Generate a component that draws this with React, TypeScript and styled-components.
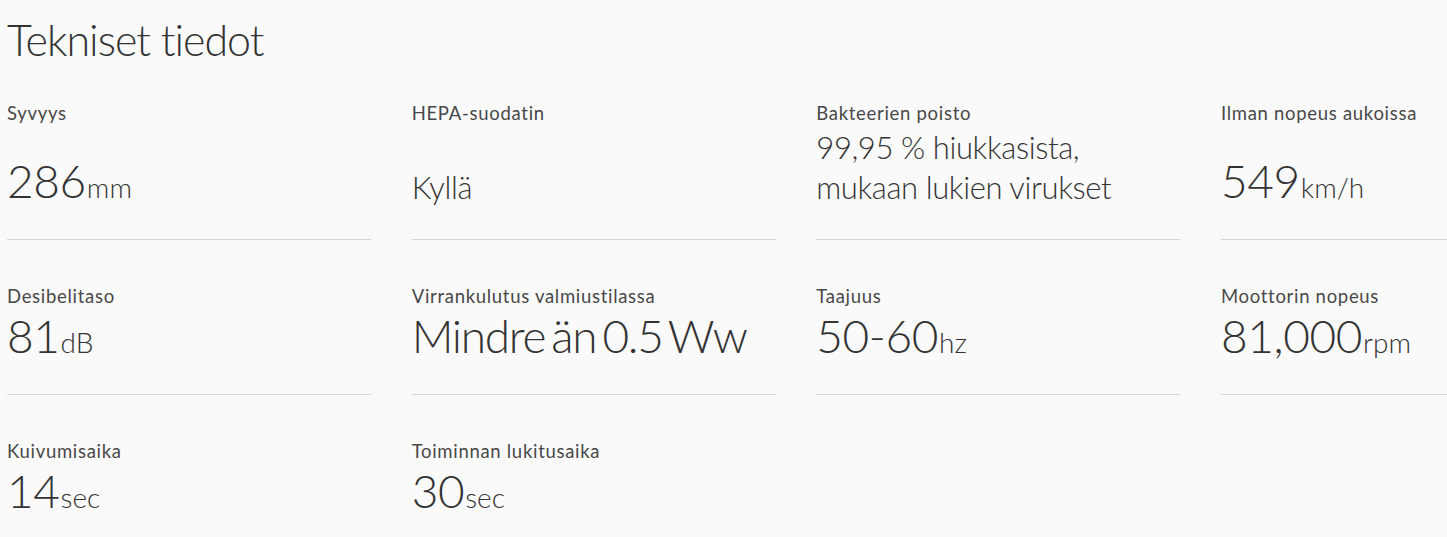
import React from "react";
import styled, { createGlobalStyle } from "styled-components";

const GlobalStyle = createGlobalStyle`
  html, body {
    margin: 0;
    padding: 0;
    background: #fafafa;
    overflow: hidden;
  }
  body {
    font-family: Lato, "Open Sans", sans-serif;
    color: #333;
  }
`;

const Page = styled.section`
  padding: 23px 0 0 7px;
  width: 1600px;
`;

const Title = styled.h2`
  margin: 0;
  font-size: 43px;
  line-height: 34px;
  font-weight: 300;
  color: #333;
  letter-spacing: -1px;
`;

const Grid = styled.div`
  display: grid;
  grid-template-columns: repeat(4, 364px);
  column-gap: 40.67px;
`;

const Cell = styled.div`
  display: flex;
  flex-direction: column;
  padding: 44px 0 32px;
  border-bottom: 1px solid #d6d6d6;
`;

const Label = styled.div`
  font-size: 18.5px;
  line-height: 24px;
  font-weight: 400;
  letter-spacing: 0.7px;
  color: #484848;
  margin-bottom: 2px;
`;

const Value = styled.div<{ $compact?: boolean }>`
  margin-top: auto;
  font-size: 46px;
  line-height: 52px;
  font-weight: 300;
  color: #333;
  white-space: nowrap;
  word-spacing: ${(p) => (p.$compact ? "-5px" : "-4px")};
  letter-spacing: ${(p) => (p.$compact ? "-1.3px" : "-0.4px")};
`;

const TextValue = styled.div`
  margin-top: auto;
  font-size: 31px;
  line-height: 40px;
  font-weight: 300;
  letter-spacing: -0.4px;
  color: #333;
`;

const Unit = styled.span`
  font-size: 28px;
  line-height: 1;
  font-weight: 300;
  letter-spacing: 0;
  margin-left: 1px;
`;

type Spec = {
  label: string;
  value: string;
  unit?: string;
  text?: boolean;
  compact?: boolean;
};

const specs: Spec[] = [
  { label: "Syvyys", value: "286", unit: "mm" },
  { label: "HEPA-suodatin", value: "Kyllä", text: true },
  {
    label: "Bakteerien poisto",
    value: "99,95 % hiukkasista, mukaan lukien virukset",
    text: true,
  },
  { label: "Ilman nopeus aukoissa", value: "549", unit: "km/h" },
  { label: "Desibelitaso", value: "81", unit: "dB" },
  {
    label: "Virrankulutus valmiustilassa",
    value: "Mindre än 0.5 Ww",
    compact: true,
  },
  { label: "Taajuus", value: "50-60", unit: "hz" },
  { label: "Moottorin nopeus", value: "81,000", unit: "rpm" },
  { label: "Kuivumisaika", value: "14", unit: "sec" },
  { label: "Toiminnan lukitusaika", value: "30", unit: "sec" },
];

export default function App() {
  return (
    <Page>
      <GlobalStyle />
      <Title>Tekniset tiedot</Title>
      <Grid>
        {specs.map((s) => (
          <Cell key={s.label}>
            <Label>{s.label}</Label>
            {s.text ? (
              <TextValue>{s.value}</TextValue>
            ) : (
              <Value $compact={s.compact}>
                {s.value}
                {s.unit && <Unit>{s.unit}</Unit>}
              </Value>
            )}
          </Cell>
        ))}
      </Grid>
    </Page>
  );
}
